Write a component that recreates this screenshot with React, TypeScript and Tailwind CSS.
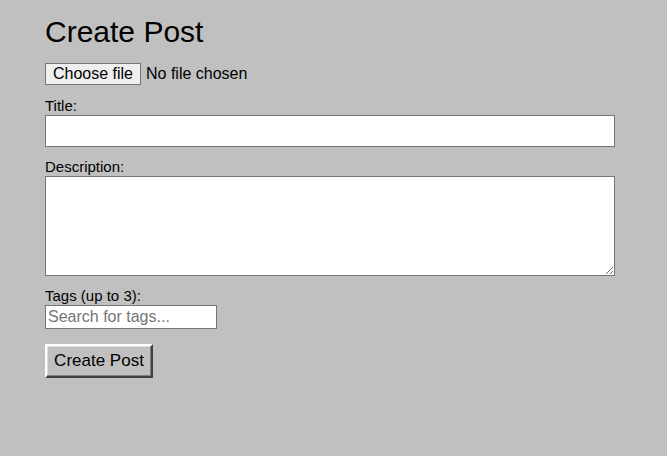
import React, { useState } from "react";

export default function App() {
  const [title, setTitle] = useState("");
  const [description, setDescription] = useState("");
  const [tagQuery, setTagQuery] = useState("");
  const [fileName, setFileName] = useState("");

  return (
    <div className="min-h-[456px] bg-[#c0c0c0] px-[45px] pt-[14px] font-['Liberation_Sans',Arial,sans-serif] text-black">
      <h1 className="text-[30px] leading-[36px] font-normal">Create Post</h1>

      <form className="mt-[13px] flex flex-col" onSubmit={(e) => e.preventDefault()}>
        {/* file picker */}
        <label className="flex h-[22px] items-center gap-[5px] text-[16px] leading-[20px]">
          <input
            type="file"
            className="hidden"
            onChange={(e) => setFileName(e.target.files?.[0]?.name ?? "")}
          />
          <span className="flex h-[22px] w-[96px] items-center justify-center border border-[#767676] bg-[#efefef]">
            Choose file
          </span>
          <span>{fileName || "No file chosen"}</span>
        </label>

        <label className="mt-[12px] text-[15px] leading-[18px]">Title:</label>
        <input
          type="text"
          value={title}
          onChange={(e) => setTitle(e.target.value)}
          className="h-[32px] w-[570px] border border-[#767676] bg-white px-[2px] text-[16px]"
        />

        <label className="mt-[11px] text-[15px] leading-[18px]">Description:</label>
        <textarea
          value={description}
          onChange={(e) => setDescription(e.target.value)}
          className="h-[100px] w-[570px] border border-[#767676] bg-white px-[2px] text-[16px]"
        />

        <label className="mt-[11px] text-[15px] leading-[18px]">Tags (up to 3):</label>
        <input
          type="text"
          value={tagQuery}
          onChange={(e) => setTagQuery(e.target.value)}
          placeholder="Search for tags..."
          className="h-[24px] w-[172px] border border-[#767676] bg-white px-[2px] text-[16px] placeholder:text-[#757575]"
        />

        <div className="mt-[15px]">
          <button
            type="submit"
            className="h-[34px] w-[108px] border-2 border-t-white border-l-white border-r-[#404040] border-b-[#404040] bg-[#c0c0c0] text-[17px] shadow-[inset_-1px_-1px_#808080,inset_1px_1px_#dfdfdf]"
          >
            Create Post
          </button>
        </div>
      </form>
    </div>
  );
}
